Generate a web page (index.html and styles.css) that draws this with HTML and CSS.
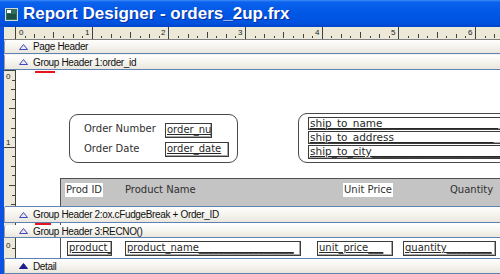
FILE: index.html
```html
<!DOCTYPE html>
<html>
<head>
<meta charset="utf-8">
<title>Report Designer</title>
<link rel="stylesheet" href="styles.css">
</head>
<body>
<div class="window">
  <div class="titlebar">
    <svg class="appicon" width="13" height="13" viewBox="0 0 13 13">
      <rect x="0.5" y="0.5" width="12" height="12" fill="#2f6f5e" stroke="#d8d8d8"/>
      <rect x="2" y="2" width="4" height="3" fill="#ffffff"/>
      <rect x="2" y="6" width="9" height="5" fill="#1e4f43"/>
    </svg>
    <span class="title">Report Designer - orders_2up.frx</span>
  </div>
  <div class="frame">
    <div class="main">
      <div class="hruler">
        <svg width="496" height="13" viewBox="0 0 496 13" shape-rendering="crispEdges">
          <rect x="0" y="0" width="496" height="13" fill="#ece9d8"/>
          <path stroke="#808080" d="M0 12.5H496"/>
          <path stroke="#404040" d="M11.5 0V12M21.5 9V11M30.5 7V11M40.5 9V11M49.5 5V11M59.5 9V11M69.5 7V11M78.5 9V11M88.5 0V12M97.5 9V11M107.5 7V11M116.5 9V11M126.5 5V11M136.5 9V11M145.5 7V11M155.5 9V11M164.5 0V12M174.5 9V11M184.5 7V11M193.5 9V11M203.5 5V11M212.5 9V11M222.5 7V11M231.5 9V11M241.5 0V12M251.5 9V11M260.5 7V11M270.5 9V11M279.5 5V11M289.5 9V11M299.5 7V11M308.5 9V11M318.5 0V12M327.5 9V11M337.5 7V11M346.5 9V11M356.5 5V11M366.5 9V11M375.5 7V11M385.5 9V11M394.5 0V12M404.5 9V11M414.5 7V11M423.5 9V11M433.5 5V11M442.5 9V11M452.5 7V11M461.5 9V11M471.5 0V12M481.5 9V11M490.5 7V11"/>
          <g class="rnum">
            <text x="15" y="8">0</text>
            <text x="81" y="8">1</text>
            <text x="157" y="8">2</text>
            <text x="234" y="8">3</text>
            <text x="311" y="8">4</text>
            <text x="387" y="8">5</text>
            <text x="464" y="8">6</text>
          </g>
        </svg>
      </div>

      <div class="bar bar-ph"><svg class="tri" width="9" height="6" viewBox="0 0 9 6"><polygon points="0.5,5.5 4.5,0.5 8.5,5.5" fill="#e8e8f4" stroke="#4646b4"/></svg><span>Page Header</span></div>
      <div class="bar bar-gh1"><svg class="tri" width="9" height="6" viewBox="0 0 9 6"><polygon points="0.5,5.5 4.5,0.5 8.5,5.5" fill="#e8e8f4" stroke="#4646b4"/></svg><span>Group Header 1:order_id</span></div>

      <div class="band band-gh1">
        <div class="vruler">
          <svg width="12" height="136" viewBox="0 0 12 136" shape-rendering="crispEdges">
            <rect width="12" height="136" fill="#ece9d8"/>
            <path stroke="#404040" d="M11.5 0V136M0 0.5H11M8 10.5H11M7 19.5H11M8 29.5H11M5 38.5H11M8 48.5H11M7 58.5H11M8 67.5H11M0 77.5H11M8 86.5H11M7 96.5H11M8 105.5H11M5 115.5H11M8 125.5H11M7 134.5H11"/>
            <g class="rnum">
              <text x="2" y="9">0</text>
              <text x="2" y="75">1</text>
            </g>
          </svg>
        </div>
        <div class="canvas">
          <div class="marker marker-gh1"></div>

          <div class="rrect rrect-order"></div>
          <div class="lbl lbl-num">Order Number</div>
          <div class="fld fld-num">order_number</div>
          <div class="lbl lbl-date">Order Date</div>
          <div class="fld fld-date">order_date</div>

          <div class="rrect rrect-ship"></div>
          <div class="fld ship ship-1">ship_to_name______________________</div>
          <div class="fld ship ship-2">ship_to_address___________________</div>
          <div class="fld ship ship-3">ship_to_city_________________________</div>

          <div class="colhead">
            <span class="ch ch-white ch-id">Prod ID</span>
            <span class="ch ch-name">Product Name</span>
            <span class="ch ch-white ch-price">Unit Price</span>
            <span class="ch ch-qty">Quantity</span>
          </div>
        </div>
      </div>

      <div class="bar bar-gh2"><svg class="tri" width="9" height="6" viewBox="0 0 9 6"><polygon points="0.5,5.5 4.5,0.5 8.5,5.5" fill="#e8e8f4" stroke="#4646b4"/></svg><span>Group Header 2:ox.cFudgeBreak + Order_ID</span></div>
      <div class="band band-gh2">
        <div class="vruler"></div>
        <div class="canvas">
          <div class="marker marker-gh2"></div>
          <div class="vline"></div>
        </div>
      </div>
      <div class="bar bar-gh3"><svg class="tri" width="9" height="6" viewBox="0 0 9 6"><polygon points="0.5,5.5 4.5,0.5 8.5,5.5" fill="#e8e8f4" stroke="#4646b4"/></svg><span>Group Header 3:RECNO()</span></div>

      <div class="band band-detail">
        <div class="vruler">
          <svg width="12" height="20" viewBox="0 0 12 20" shape-rendering="crispEdges">
            <rect width="12" height="20" fill="#ece9d8"/>
            <path stroke="#404040" d="M11.5 0V20M8 10.5H11"/>
            <g class="rnum"><text x="2" y="10">0</text></g>
          </svg>
        </div>
        <div class="canvas">
          <div class="vline"></div>
          <div class="fld dfld d-id">product_</div>
          <div class="fld dfld d-name">product_name___________________</div>
          <div class="fld dfld d-price">unit_price___</div>
          <div class="fld dfld d-qty">quantity_________</div>
        </div>
      </div>

      <div class="bar bar-detail"><svg class="tri" width="9" height="6" viewBox="0 0 9 6"><polygon points="0.5,5.5 4.5,0.5 8.5,5.5" fill="#1c1c8c" stroke="#1c1c8c"/></svg><span>Detail</span></div>
    </div>
  </div>
</div>
</body>
</html>
```

FILE: styles.css
```css
* {
  box-sizing: border-box;
  margin: 0;
  padding: 0;
}

html, body {
  width: 500px;
  height: 274px;
  overflow: hidden;
  background: #ffffff;
}

body {
  font-family: "Liberation Sans", Arial, sans-serif;
}

.window {
  width: 500px;
  height: 274px;
  display: flex;
  flex-direction: column;
  overflow: hidden;
}

/* ---------- title bar ---------- */
.titlebar {
  flex: none;
  height: 27px;
  display: flex;
  align-items: center;
  gap: 5px;
  padding-left: 5px;
  padding-top: 1px;
  background: linear-gradient(to bottom, #3d8cf8 0px, #0c62ec 2px, #0058e7 45%, #0052de 85%, #0046cc 100%);
}

.appicon {
  flex: none;
  display: block;
}

.title {
  color: #ffffff;
  font-family: "Liberation Sans", Arial, sans-serif;
  font-weight: bold;
  font-size: 17px;
  white-space: nowrap;
  text-shadow: 1px 1px 0 #0a2e9c;
}

/* ---------- frame ---------- */
.frame {
  flex: 1;
  display: flex;
  min-height: 0;
  border-left: 4px solid #0c52e2;
}

.main {
  flex: 1;
  min-width: 0;
  display: flex;
  flex-direction: column;
  background: #ffffff;
}

.hruler {
  flex: none;
  height: 13px;
}

.hruler svg,
.vruler svg {
  display: block;
}

.rnum text {
  font-family: "Liberation Sans", Arial, sans-serif;
  font-size: 8px;
  fill: #202020;
}

/* ---------- band bars ---------- */
.bar {
  flex: none;
  display: flex;
  align-items: center;
  padding-left: 14px;
  border-left: 1px solid #9c9c9c;
  border-top-left-radius: 2px;
  border-bottom: 1px solid #5f82b4;
  background: linear-gradient(to bottom, #fefefd 0%, #f6f5f0 45%, #e9e7dd 100%);
  font-family: "Liberation Sans", Arial, sans-serif;
  font-size: 10px;
  letter-spacing: -0.35px;
  color: #111111;
  white-space: nowrap;
}

.bar .tri {
  flex: none;
  display: block;
  margin-right: 5px;
}

.bar-ph { height: 14px; }
.bar-gh1 { height: 16px; border-top: 1px solid #f4f3ee; }
.bar-gh2 { height: 17px; border-top: 1px solid #5f82b4; }
.bar-gh3 { height: 13px; }
.bar-detail { height: 16px; border-top: 1px solid #5f82b4; }

/* ---------- bands ---------- */
.band {
  flex: none;
  display: flex;
  overflow: hidden;
}

.band-gh1 { height: 136px; }
.band-gh2 { height: 2px; }
.band-detail { height: 20px; }

.vruler {
  flex: none;
  width: 12px;
  background: #ece9d8;
  border-right: 1px solid #404040;
}

.canvas {
  position: relative;
  flex: 1;
  overflow: hidden;
  background: #ffffff;
  font-family: "DejaVu Sans", Verdana, sans-serif;
  font-size: 10px;
  color: #303030;
}

.marker {
  position: absolute;
  height: 2px;
  background: #e8141c;
}

.marker-gh1 { left: 19px; top: 1px; width: 20px; }
.marker-gh2 { left: 19px; top: 0; width: 16px; }

.vline {
  position: absolute;
  left: 44px;
  top: 0;
  bottom: 0;
  width: 1px;
  background: #505050;
}

.rrect {
  position: absolute;
  border: 1px solid #4a4a4a;
  border-radius: 9px;
}

.rrect-order { left: 53px; top: 44px; width: 169px; height: 49px; }
.rrect-ship { left: 282px; top: 43px; width: 300px; height: 50px; }

.lbl {
  position: absolute;
  line-height: 14px;
  white-space: nowrap;
}

.lbl-num { left: 68px; top: 52px; }
.lbl-date { left: 68px; top: 72px; }

.fld {
  position: absolute;
  border: 1px solid #3c3c3c;
  box-shadow: inset -1px -1px 0 #a8a8a8;
  background: #ffffff;
  padding-left: 1px;
  line-height: 12px;
  white-space: nowrap;
  overflow: hidden;
  text-decoration: underline;
  color: #282828;
}

.fld-num { left: 149px; top: 53px; width: 47px; height: 15px; }
.fld-date { left: 149px; top: 72px; width: 64px; height: 15px; }

.ship {
  left: 292px;
  width: 300px;
  font-size: 10.5px;
  line-height: 10px;
}
.ship-1 { top: 47px; height: 13px; }
.ship-2 { top: 61px; height: 13px; }
.ship-3 { top: 75px; height: 14px; }

.colhead {
  position: absolute;
  left: 44px;
  top: 108px;
  width: 460px;
  height: 40px;
  background: #c4c4c4;
  border-top: 1px solid #505050;
  border-left: 1px solid #505050;
}

.ch {
  position: absolute;
  top: 4px;
  height: 14px;
  line-height: 14px;
  white-space: nowrap;
  color: #303030;
}

.ch-white { background: #ffffff; padding-left: 1px; }
.ch-id { left: 4px; width: 38px; }
.ch-name { left: 64px; }
.ch-price { left: 282px; width: 50px; }
.ch-qty { left: 389px; }

.dfld { top: 3px; height: 15px; }
.d-id { left: 51px; width: 45px; }
.d-name { left: 109px; width: 176px; }
.d-price { left: 301px; width: 76px; }
.d-qty { left: 387px; width: 93px; }
```
